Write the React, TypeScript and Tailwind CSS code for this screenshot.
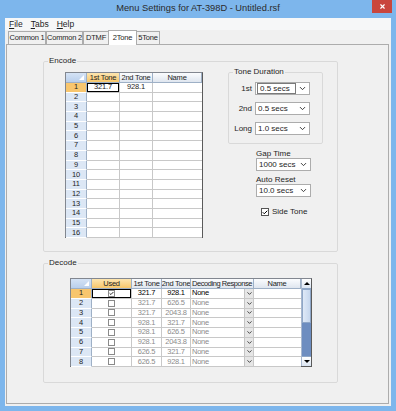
import { Check, ChevronDown, X } from "lucide-react"

const font = "font-['Liberation_Sans',Arial,sans-serif]"

const encodeRows = Array.from({ length: 16 }, (_, i) => i + 1)

const decodeRows = [
  { used: true, t1: "321.7", t2: "928.1" },
  { used: false, t1: "321.7", t2: "626.5" },
  { used: false, t1: "321.7", t2: "2043.8" },
  { used: false, t1: "928.1", t2: "321.7" },
  { used: false, t1: "928.1", t2: "626.5" },
  { used: false, t1: "928.1", t2: "2043.8" },
  { used: false, t1: "626.5", t2: "321.7" },
  { used: false, t1: "626.5", t2: "928.1" },
]

function Combo({ value, focused }: { value: string; focused?: boolean }) {
  return (
    <div className="w-[55px] h-[13px] bg-white border border-[#acacac] flex items-center">
      <div className={`flex-1 h-[11px] flex items-center pl-[2px] ${focused ? "border border-[#7a7a7a] ml-[1px]" : ""}`}>
        {value}
      </div>
      <ChevronDown className="w-[9px] h-[9px] mx-[2px] text-[#333]" strokeWidth={2.5} />
    </div>
  )
}

function HeaderCell({ w, label, active }: { w: string; label: string; active?: boolean }) {
  return (
    <div
      className={`${w} h-full flex items-center justify-center overflow-hidden border-r border-[#9eb0c6] bg-gradient-to-b ${
        active ? "from-[#fde6b0] to-[#f7c669]" : "from-[#fbfcfe] to-[#dfe6ef]"
      }`}
    >
      {label}
    </div>
  )
}

function RowHeader({ w, n, active }: { w: string; n: number; active?: boolean }) {
  return (
    <div
      className={`${w} h-full flex items-center justify-center border-r border-[#9eb0c6] border-b border-b-white ${
        active ? "bg-[#f8c66e]" : "bg-[#dce7f5]"
      }`}
    >
      {n}
    </div>
  )
}

function Corner({ w }: { w: string }) {
  return (
    <div className={`${w} h-full relative bg-gradient-to-b from-[#d5e3f5] to-[#b9cfec] border-r border-[#9eb0c6]`}>
      <div className="absolute right-[2px] bottom-[2px] w-0 h-0 border-l-[5px] border-l-transparent border-b-[5px] border-b-white" />
    </div>
  )
}

function EncodeGrid() {
  return (
    <div className="w-[138px] h-[166px] bg-white border border-[#828790] border-r-[#5a5a5a] border-b-[#5a5a5a] flex flex-col text-[7.5px] tracking-[-0.2px]">
      <div className="h-[10px] flex border-b border-[#9eb0c6]">
        <Corner w="w-[21px]" />
        <HeaderCell w="w-[33px]" label="1st Tone" active />
        <HeaderCell w="w-[33px]" label="2nd Tone" />
        <HeaderCell w="flex-1" label="Name" />
      </div>
      {encodeRows.map((n) => (
        <div key={n} className="h-[9.7px] flex">
          <RowHeader w="w-[21px]" n={n} active={n === 1} />
          <div className="w-[33px] h-full border-r border-b border-[#c8c8c8] flex items-center justify-center">
            {n === 1 && (
              <div className="w-full h-full border-[1.5px] border-black flex items-center justify-center">321.7</div>
            )}
          </div>
          <div className="w-[33px] h-full border-r border-b border-[#c8c8c8] flex items-center justify-center">
            {n === 1 && "928.1"}
          </div>
          <div className="flex-1 h-full border-b border-[#c8c8c8]" />
        </div>
      ))}
    </div>
  )
}

function CheckBox({ checked }: { checked?: boolean }) {
  return (
    <div className="w-[7px] h-[7px] bg-white border border-[#8a8a8a] flex items-center justify-center">
      {checked && <Check className="w-[7px] h-[7px] text-black" strokeWidth={4} />}
    </div>
  )
}

function DecodeGrid() {
  return (
    <div className="w-[242px] h-[89px] bg-white border border-[#828790] border-r-[#5a5a5a] border-b-[#5a5a5a] flex text-[7.5px] tracking-[-0.25px]">
      <div className="flex-1 flex flex-col">
        <div className="h-[10px] flex border-b border-[#9eb0c6]">
          <Corner w="w-[21px]" />
          <HeaderCell w="w-[40px]" label="Used" active />
          <HeaderCell w="w-[30px]" label="1st Tone" />
          <HeaderCell w="w-[29px]" label="2nd Tone" />
          <div className="w-[63px] h-full flex items-center justify-center border-r border-[#9eb0c6] bg-gradient-to-b from-[#fbfcfe] to-[#dfe6ef] overflow-hidden tracking-[-0.45px]">
            Decoding Response
          </div>
          <HeaderCell w="flex-1" label="Name" />
        </div>
        {decodeRows.map((r, i) => {
          const cur = i === 0
          const txt = cur ? "text-black" : "text-[#8c8c8c]"
          return (
            <div key={i} className="h-[9.75px] flex">
              <RowHeader w="w-[21px]" n={i + 1} active={cur} />
              <div className="w-[40px] h-full border-r border-b border-[#c8c8c8] flex items-center justify-center">
                {cur ? (
                  <div className="w-full h-full border-[1.5px] border-black flex items-center justify-center">
                    <CheckBox checked />
                  </div>
                ) : (
                  <CheckBox />
                )}
              </div>
              <div className={`w-[30px] h-full border-r border-b border-[#c8c8c8] flex items-center justify-center ${txt}`}>
                {r.t1}
              </div>
              <div className={`w-[29px] h-full border-r border-b border-[#c8c8c8] flex items-center justify-center ${txt}`}>
                {r.t2}
              </div>
              <div className={`w-[63px] h-full border-r border-b border-[#c8c8c8] flex items-center ${txt}`}>
                <span className="flex-1 pl-[1px]">None</span>
                <div className="w-[9px] h-full bg-[#e6e6e6] border-l border-[#c4c4c4] flex items-center justify-center">
                  <ChevronDown className="w-[7px] h-[7px] text-[#333]" strokeWidth={3} />
                </div>
              </div>
              <div className="flex-1 h-full border-b border-[#c8c8c8]" />
            </div>
          )
        })}
      </div>
      <div className="w-[10px] flex flex-col bg-[#e8eef7] border-l border-[#a8b8cf]">
        <div className="h-[10px] flex items-center justify-center bg-gradient-to-b from-white to-[#dbe5f2] border-b border-[#8ea6c7]">
          <div className="w-0 h-0 border-l-[3px] border-r-[3px] border-b-[3px] border-l-transparent border-r-transparent border-b-black" />
        </div>
        <div className="h-[34px] bg-gradient-to-r from-[#dfe9f7] to-[#c6d7ee] border border-[#8ea6c7]" />
        <div className="flex-1 bg-[#6d8dc0]" />
        <div className="h-[10px] flex items-center justify-center bg-gradient-to-b from-white to-[#dbe5f2] border-t border-[#8ea6c7]">
          <div className="w-0 h-0 border-l-[3px] border-r-[3px] border-t-[3px] border-l-transparent border-r-transparent border-t-black" />
        </div>
      </div>
    </div>
  )
}

const tabs = ["Common 1", "Common 2", "DTMF", "2Tone", "5Tone"]
const tabWidths = ["w-[38px]", "w-[37px]", "w-[26px]", "w-[29px]", "w-[24px]"]

export default function App() {
  return (
    <div className={`${font} w-[396px] h-[411px] bg-[#7db6ec] flex flex-col text-[8px] leading-[10px] text-[#1e1e1e] whitespace-nowrap overflow-hidden`}>
      {/* title bar */}
      <div className="h-[18px] relative flex items-center justify-center">
        <span className="text-[9.3px] text-[#2b2b2b] mt-[-2px]">Menu Settings for AT-398D - Untitled.rsf</span>
        <div className="absolute right-[4px] top-0 w-[20px] h-[13px] bg-[#c9463d] flex items-center justify-center">
          <X className="w-[7px] h-[7px] text-white" strokeWidth={4} />
        </div>
      </div>

      <div className="mx-[5px] h-[388px] bg-[#f0f0f0] flex flex-col">
        {/* menu */}
        <div className="h-[12px] bg-[#f6f7f8] flex items-center gap-[8px] pl-[4px] text-[8.5px]">
          <span><span className="underline">F</span>ile</span>
          <span><span className="underline">T</span>abs</span>
          <span><span className="underline">H</span>elp</span>
        </div>

        {/* tabs */}
        <div className="h-[14px] flex items-end pl-[3px] text-[7.5px] tracking-[-0.2px]">
          {tabs.map((t, i) => {
            const sel = t === "2Tone"
            return (
              <div
                key={t}
                className={`${tabWidths[i]} flex items-center justify-center border border-[#acacac] border-b-0 ${
                  sel ? "h-[15px] bg-white -mx-[1px] z-10 mb-[-1px]" : "h-[13px] bg-[#f0f0f0]"
                }`}
              >
                {t}
              </div>
            )
          })}
        </div>

        {/* tab page */}
        <div className="ml-[1px] mr-[2px] h-[360px] border border-[#acacac] bg-[#f0f0f0] pl-[36px] pt-[11px]">
          <fieldset className="w-[295px] h-[196px] border border-[#d9d9d9] rounded-[2px]">
            <legend className="ml-[4px] px-[1px] leading-[10px]">Encode</legend>
            <div className="pl-[21px] flex">
              <div className="pt-[6px]">
                <EncodeGrid />
              </div>
              <div className="ml-[25px] pt-[1px] flex flex-col">
                <fieldset className="w-[95px] h-[77px] border border-[#d9d9d9] rounded-[2px]">
                  <legend className="ml-[4px] px-[1px] leading-[10px]">Tone Duration</legend>
                  <div className="flex flex-col gap-[7px] pt-[5px]">
                    {[
                      ["1st", "0.5 secs"],
                      ["2nd", "0.5 secs"],
                      ["Long", "1.0 secs"],
                    ].map(([l, v], i) => (
                      <div key={l} className="flex items-center">
                        <span className="w-[26px] text-right pr-[3px]">{l}</span>
                        <Combo value={v} focused={i === 0} />
                      </div>
                    ))}
                  </div>
                </fieldset>
                <div className="pl-[28px] flex flex-col">
                  <span className="mt-[5px] leading-[9px]">Gap Time</span>
                  <Combo value="1000 secs" />
                  <span className="mt-[4px] leading-[9px]">Auto Reset</span>
                  <Combo value="10.0 secs" />
                  <div className="mt-[10px] ml-[5px] flex items-center gap-[3px]">
                    <div className="w-[8px] h-[8px] bg-white border border-[#555] flex items-center justify-center">
                      <Check className="w-[7px] h-[7px] text-black" strokeWidth={4} />
                    </div>
                    <span>Side Tone</span>
                  </div>
                </div>
              </div>
            </div>
          </fieldset>

          <fieldset className="mt-[6px] w-[295px] h-[125px] border border-[#d9d9d9] rounded-[2px]">
            <legend className="ml-[4px] px-[1px] leading-[10px]">Decode</legend>
            <div className="pl-[26px] pt-[10px]">
              <DecodeGrid />
            </div>
          </fieldset>
        </div>
      </div>
    </div>
  )
}
